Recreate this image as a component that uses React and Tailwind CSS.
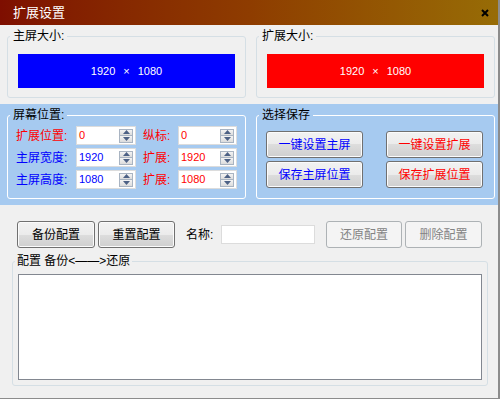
import React from 'react';

const BLUE = 'text-[#0000ff]';
const RED = 'text-[#ff0000]';

const btnBase =
  'flex items-center justify-center rounded-[3px] border border-[#707070] bg-[linear-gradient(to_bottom,#f2f2f2_0%,#ebebeb_50%,#dddddd_50%,#cfcfcf_100%)] shadow-[inset_0_0_0_1px_#fbfbfb] text-[12px]';

const Spin = () => (
  <div className="flex flex-col w-[14px] h-[14px] mr-[2px]">
    <div className="flex-1 flex items-center justify-center border border-[#a9b4c2] bg-linear-to-b from-[#f4f4f4] to-[#dcdcdc]">
      <svg width="7" height="4" viewBox="0 0 7 4">
        <path d="M0 4 L3.5 0 L7 4 Z" fill="#4d6185" />
      </svg>
    </div>
    <div className="flex-1 flex items-center justify-center border border-t-0 border-[#a9b4c2] bg-linear-to-b from-[#f4f4f4] to-[#dcdcdc]">
      <svg width="7" height="4" viewBox="0 0 7 4">
        <path d="M0 0 L3.5 4 L7 0 Z" fill="#4d6185" />
      </svg>
    </div>
  </div>
);

const NumBox = ({ value, color, width }) => (
  <div
    className={`flex items-center h-[19px] bg-white border border-[#dcdcdc] ${width}`}
  >
    <span className={`flex-1 pl-[2px] text-[11px] ${color}`}>{value}</span>
    <Spin />
  </div>
);

const rows = [
  { l1: '扩展位置:', c1: RED, v1: '0', l2: '纵标:', v2: '0' },
  { l1: '主屏宽度:', c1: BLUE, v1: '1920', l2: '扩展:', v2: '1920' },
  { l1: '主屏高度:', c1: BLUE, v1: '1080', l2: '扩展:', v2: '1080' },
];

export default function App() {
  return (
    <div className="w-[500px] h-[399px] flex flex-col bg-[#f0f0f0] border-r-2 border-b border-[#8c8c8c] overflow-hidden font-['Liberation_Sans','Noto_Sans_CJK_SC',sans-serif] text-[12px] text-black">
      {/* Title bar */}
      <div className="h-[25px] shrink-0 flex items-center justify-between pl-[13px] pr-[9px] bg-linear-to-r from-[#7e0e00] via-[#8e3c00] to-[#976c06] text-white text-[13px]">
        <span>扩展设置</span>
        <svg width="8" height="8" viewBox="0 0 8 8">
          <path d="M1 1 L7 7 M7 1 L1 7" stroke="#000" strokeWidth="2" />
        </svg>
      </div>

      {/* Sizes */}
      <div className="flex gap-[10px] pl-[7px] pt-[4px]">
        <fieldset className="w-[239px] rounded-[3px] border border-[#d5dfe5]">
          <legend className="ml-[2px] px-[3px] leading-[14px]">主屏大小:</legend>
          <div className="mx-[10px] mt-[11px] mb-[9px] h-[34px] bg-[#0000ff] flex items-center justify-center text-white text-[11px]">
            1920<span className="mx-[8px]">×</span>1080
          </div>
        </fieldset>
        <fieldset className="w-[239px] rounded-[3px] border border-[#d5dfe5]">
          <legend className="ml-[2px] px-[3px] leading-[14px]">扩展大小:</legend>
          <div className="mx-[10px] mt-[11px] mb-[9px] h-[34px] bg-[#ff0000] flex items-center justify-center text-white text-[11px]">
            1920<span className="mx-[8px]">×</span>1080
          </div>
        </fieldset>
      </div>

      {/* Position / save panel */}
      <div className="mt-[6px] h-[101px] shrink-0 bg-[#a6caf0] flex gap-[10px] pl-[7px] pt-[4px]">
        <fieldset className="w-[239px] h-[91px] rounded-[3px] border border-white">
          <legend className="ml-[2px] px-[3px] leading-[14px]">屏幕位置:</legend>
          <div className="flex flex-col gap-[3px] mt-[4px] pl-[8px]">
            {rows.map((r) => (
              <div key={r.l1} className="flex items-center">
                <span className={`w-[60px] ${r.c1}`}>{r.l1}</span>
                <NumBox value={r.v1} color={r.c1} width="w-[60px]" />
                <span className={`w-[35px] ml-[7px] ${RED}`}>{r.l2}</span>
                <NumBox value={r.v2} color={RED} width="w-[59px]" />
              </div>
            ))}
          </div>
        </fieldset>
        <fieldset className="w-[239px] h-[91px] rounded-[3px] border border-white">
          <legend className="ml-[2px] px-[3px] leading-[14px]">选择保存</legend>
          <div className="grid grid-cols-[97px_97px] gap-x-[23px] gap-y-[3px] mt-[9px] pl-[9px]">
            <div className={`${btnBase} h-[27px] ${BLUE}`}>一键设置主屏</div>
            <div className={`${btnBase} h-[27px] ${RED}`}>一键设置扩展</div>
            <div className={`${btnBase} h-[27px] ${BLUE}`}>保存主屏位置</div>
            <div className={`${btnBase} h-[27px] ${RED}`}>保存扩展位置</div>
          </div>
        </fieldset>
      </div>

      {/* Backup */}
      <div className="flex items-center mt-[16px] pl-[17px] h-[27px]">
        <div className={`${btnBase} w-[78px] h-[27px]`}>备份配置</div>
        <div className={`${btnBase} w-[77px] h-[27px] ml-[3px]`}>重置配置</div>
        <span className="ml-[11px] w-[35px]">名称:</span>
        <div className="w-[94px] h-[19px] bg-white border border-[#dcdcdc]" />
        <div className="ml-[11px] w-[76px] h-[27px] flex items-center justify-center rounded-[3px] border border-[#adb2b5] bg-[#f4f4f4] text-[#838383]">
          还原配置
        </div>
        <div className="ml-[3px] w-[77px] h-[27px] flex items-center justify-center rounded-[3px] border border-[#adb2b5] bg-[#f4f4f4] text-[#838383]">
          删除配置
        </div>
      </div>

      <fieldset className="ml-[12px] mt-[6px] w-[476px] rounded-[3px] border border-[#d5dfe5]">
        <legend className="ml-[2px] px-[2px] leading-[14px]">配置 备份&lt;——&gt;还原</legend>
        <div className="ml-[5px] mt-[6px] mb-[5px] w-[464px] h-[106px] bg-white border border-[#828790]" />
      </fieldset>
    </div>
  );
}
